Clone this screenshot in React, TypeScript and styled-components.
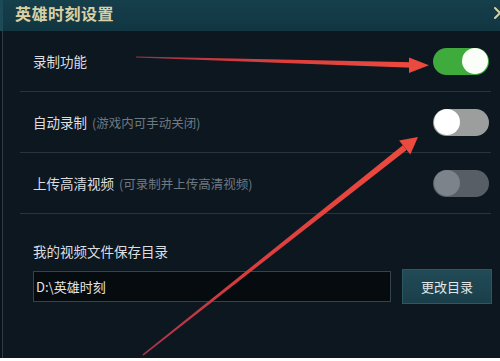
import { createGlobalStyle, styled } from 'styled-components';

type ToggleState = 'on' | 'off' | 'disabled';

type SettingRowProps = {
  label: string;
  hint?: string;
  state: ToggleState;
};

const GlobalStyle = createGlobalStyle`
  html, body {
    margin: 0;
    padding: 0;
    background: #ffffff;
  }
  body {
    font-family: "Noto Sans CJK SC", "Noto Sans", "Liberation Sans", sans-serif;
  }
`;

function Toggle({ state }: { state: ToggleState }) {
  return (
    <Track $state={state}>
      <Knob $state={state} />
    </Track>
  );
}

function SettingRow({ label, hint, state }: SettingRowProps) {
  return (
    <Row>
      <Label>
        {label}
        {hint && <Hint>{hint}</Hint>}
      </Label>
      <Toggle state={state} />
    </Row>
  );
}

function CloseIcon() {
  return (
    <CloseSvg width="14" height="14" viewBox="0 0 14 14">
      <path
        d="M2 2 L12 12 M12 2 L2 12"
        stroke="#d9cf9e"
        strokeWidth="2"
        strokeLinecap="round"
      />
    </CloseSvg>
  );
}

// 스크린샷 위에 그려진 빨간 화살표 두 개
function Annotations() {
  return (
    <Overlay width="500" height="358" viewBox="0 0 500 358">
      <defs>
        <linearGradient id="shaftA" x1="137" y1="57" x2="412" y2="65" gradientUnits="userSpaceOnUse">
          <stop offset="0" stopColor="#9a2f46" />
          <stop offset="0.35" stopColor="#d63a3c" />
          <stop offset="1" stopColor="#ec4a3e" />
        </linearGradient>
        <linearGradient id="shaftB" x1="143" y1="355" x2="405" y2="148" gradientUnits="userSpaceOnUse">
          <stop offset="0" stopColor="#a8344a" />
          <stop offset="0.4" stopColor="#d93d3e" />
          <stop offset="1" stopColor="#ec4a3e" />
        </linearGradient>
      </defs>
      <polygon points="136,56.6 412,62.3 412,67.8 136,57.6" fill="url(#shaftA)" />
      <polygon points="409,57.5 429,65.2 409,73" fill="#ec4a3e" />
      <polygon points="142.4,354.6 402.8,145.3 406.6,149.9 143.6,355.4" fill="url(#shaftB)" />
      <polygon points="399.1,140.6 418,137 410.3,154.6" fill="#ec4a3e" />
    </Overlay>
  );
}

export default function App() {
  return (
    <>
      <GlobalStyle />
      <Window>
        <TitleBar>
          <Title>英雄时刻设置</Title>
          <CloseIcon />
        </TitleBar>
        <Body>
          <SettingRow label="录制功能" state="on" />
          <SettingRow label="自动录制" hint="(游戏内可手动关闭)" state="off" />
          <SettingRow label="上传高清视频" hint="(可录制并上传高清视频)" state="disabled" />
          <Directory>
            <DirLabel>我的视频文件保存目录</DirLabel>
            <DirControls>
              <PathField>D:\英雄时刻</PathField>
              <ChangeButton>更改目录</ChangeButton>
            </DirControls>
          </Directory>
        </Body>
        <Annotations />
      </Window>
    </>
  );
}

const Window = styled.div`
  position: relative;
  width: 500px;
  height: 358px;
  display: flex;
  flex-direction: column;
  background: #0d1720;
  overflow: hidden;
  box-shadow: inset 2px 0 0 #0a1117, inset 3px 0 0 #2e3d46;
`;

const TitleBar = styled.div`
  height: 31px;
  flex-shrink: 0;
  display: flex;
  align-items: center;
  justify-content: space-between;
  padding-left: 15px;
  background: linear-gradient(180deg, #153f4b 0%, #113642 100%);
  box-shadow: inset 3px 0 0 #1d4a56;
`;

const Title = styled.div`
  font-size: 16px;
  font-weight: 700;
  color: #d9d1a6;
  letter-spacing: 0.5px;
  margin-top: -5px;
`;

const CloseSvg = styled.svg`
  margin-right: -7px;
  margin-top: -6px;
`;

const Body = styled.div`
  flex: 1;
  display: flex;
  flex-direction: column;
  padding: 0 9px 0 20px;
`;

const Row = styled.div`
  height: 60px;
  display: flex;
  align-items: center;
  justify-content: space-between;
  padding-left: 13px;
  padding-right: 2px;
  border-bottom: 1px solid #26343e;
`;

const Label = styled.div`
  display: flex;
  align-items: baseline;
  gap: 5px;
  font-size: 13.5px;
  color: #dcdfe0;
  margin-top: -1px;
`;

const Hint = styled.span`
  font-size: 12.5px;
  color: #6e7980;
`;

const trackColors: Record<ToggleState, string> = {
  on: '#3eab3c',
  off: '#9c9d9d',
  disabled: '#575e65',
};

const knobColors: Record<ToggleState, string> = {
  on: '#fbfdf8',
  off: '#ffffff',
  disabled: '#7c838a',
};

const Track = styled.div<{ $state: ToggleState }>`
  width: 56px;
  height: 27px;
  border-radius: 14px;
  display: flex;
  align-items: center;
  justify-content: ${({ $state }) => ($state === 'on' ? 'flex-end' : 'flex-start')};
  padding: 0 1px;
  box-sizing: border-box;
  background: ${({ $state }) => trackColors[$state]};
`;

const Knob = styled.div<{ $state: ToggleState }>`
  width: 26px;
  height: 26px;
  border-radius: 50%;
  background: ${({ $state }) => knobColors[$state]};
`;

const Directory = styled.div`
  display: flex;
  flex-direction: column;
  padding: 27px 0 0 13px;
`;

const DirLabel = styled.div`
  font-size: 13.5px;
  color: #dcdfe0;
  line-height: 20px;
`;

const DirControls = styled.div`
  display: flex;
  align-items: center;
  gap: 11px;
  margin-top: 8px;
  margin-right: -1px;
`;

const PathField = styled.div`
  width: 358px;
  height: 31px;
  box-sizing: border-box;
  display: flex;
  align-items: center;
  padding-left: 2px;
  background: #060b10;
  border: 1px solid #34444d;
  font-size: 13px;
  color: #e4e6e6;
`;

const ChangeButton = styled.div`
  width: 90px;
  height: 35px;
  box-sizing: border-box;
  display: flex;
  align-items: center;
  justify-content: center;
  background: linear-gradient(180deg, #214b57 0%, #1a3f4a 100%);
  border: 1px solid #2c5864;
  font-size: 13px;
  color: #e2e6e6;
`;

const Overlay = styled.svg`
  position: absolute;
  left: 0;
  top: 0;
  pointer-events: none;
`;
